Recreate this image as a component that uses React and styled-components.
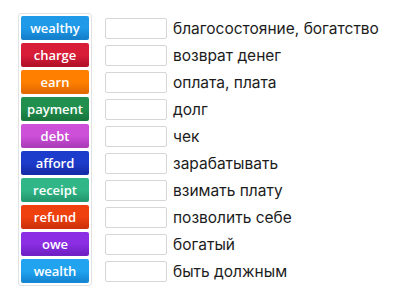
import React from "react";
import styled, { createGlobalStyle } from "styled-components";

const GlobalStyle = createGlobalStyle`
  body {
    margin: 0;
    background: #ffffff;
    font-family: "Inter", "Liberation Sans", sans-serif;
  }
`;

const words = [
  { text: "wealthy", color: "#1f9ae8", dark: "#1580cc" },
  { text: "charge", color: "#d81d38", dark: "#b5122a" },
  { text: "earn", color: "#ff8000", dark: "#e26a00" },
  { text: "payment", color: "#218f4d", dark: "#18773d" },
  { text: "debt", color: "#cc50d8", dark: "#ad3cbb" },
  { text: "afford", color: "#1e3ccb", dark: "#162ca8" },
  { text: "receipt", color: "#31b787", dark: "#249a70" },
  { text: "refund", color: "#ef4010", dark: "#cf320a" },
  { text: "owe", color: "#8b2ee4", dark: "#7020c4" },
  { text: "wealth", color: "#21a3f0", dark: "#1587d3" },
];

const definitions = [
  "благосостояние, богатство",
  "возврат денег",
  "оплата, плата",
  "долг",
  "чек",
  "зарабатывать",
  "взимать плату",
  "позволить себе",
  "богатый",
  "быть должным",
];

const App = () => {
  return (
    <>
      <GlobalStyle />
      <Page>
        <WordBank>
          {words.map((w) => (
            <Tile key={w.text} color={w.color} dark={w.dark}>
              {w.text}
            </Tile>
          ))}
        </WordBank>
        <Answers>
          {definitions.map((d) => (
            <Row key={d}>
              <Slot />
              <Definition>{d}</Definition>
            </Row>
          ))}
        </Answers>
      </Page>
    </>
  );
};

export default App;

const Page = styled.div`
  display: flex;
  align-items: flex-start;
  padding: 13px 0 0 18px;
  width: 400px;
  height: 300px;
  box-sizing: border-box;
`;

const WordBank = styled.div`
  display: flex;
  flex-direction: column;
  gap: 3px;
  padding: 2px;
  border: 1px solid #e2e2e2;
  border-radius: 3px;
  width: 68px;
`;

const Tile = styled.div`
  height: 24px;
  box-sizing: border-box;
  display: flex;
  align-items: center;
  justify-content: center;
  border-radius: 2px;
  background: linear-gradient(${(p) => p.color} 55%, ${(p) => p.dark});
  border-bottom: 2px solid ${(p) => p.dark};
  color: #ffffff;
  font-family: "Open Sans", "Liberation Sans", sans-serif;
  font-weight: 600;
  font-size: 13px;
  padding-top: 1px;
`;

const Answers = styled.div`
  display: flex;
  flex-direction: column;
  margin-left: 13px;
  padding-top: 2px;
`;

const Row = styled.div`
  display: flex;
  align-items: center;
  height: 27px;
`;

const Slot = styled.div`
  width: 62px;
  height: 21px;
  box-sizing: border-box;
  border: 1px solid #d6d6d6;
  border-radius: 2px;
  background: #ffffff;
`;

const Definition = styled.span`
  margin-left: 6px;
  font-size: 15.5px;
  color: #1c1c1c;
  white-space: nowrap;
`;
